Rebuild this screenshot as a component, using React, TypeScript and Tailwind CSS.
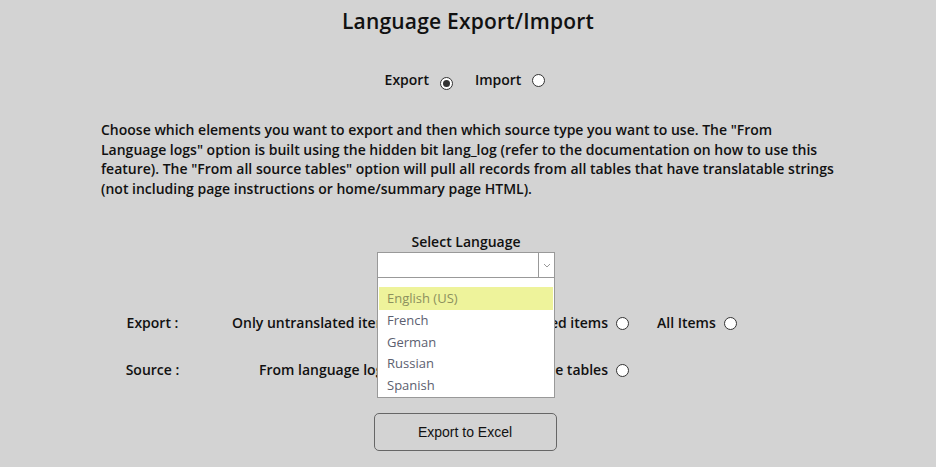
import React from "react";

function Radio({ checked = false }: { checked?: boolean }) {
  return (
    <span className="inline-flex h-[13px] w-[13px] shrink-0 items-center justify-center rounded-full border border-[#333] bg-white">
      {checked && <span className="h-[7px] w-[7px] rounded-full bg-[#333]" />}
    </span>
  );
}

function Option({ label, checked }: { label: string; checked?: boolean }) {
  return (
    <span className="inline-flex items-center gap-[8px] whitespace-nowrap">
      <span>{label}</span>
      <Radio checked={checked} />
    </span>
  );
}

const languages = ["English (US)", "French", "German", "Russian", "Spanish"];

export default function App() {
  return (
    <div className="h-[467px] w-[936px] overflow-hidden bg-[#d3d3d3] font-['Open_Sans','Liberation_Sans',sans-serif] text-[#111]">
      <h1 className="pt-[7px] text-center text-[21px] font-semibold leading-[28px] tracking-[0.2px]">
        Language Export/Import
      </h1>

      <div className="mr-[6px] mt-[34px] flex items-center justify-center gap-[22px] text-[14px] font-semibold leading-[18px]">
        <span className="inline-flex items-center gap-[11px]">
          <span>Export</span>
          <span className="mt-[4px]">
            <Radio checked />
          </span>
        </span>
        <span className="inline-flex items-center gap-[11px]">
          <span>Import</span>
          <span className="mt-[4px]">
            <Radio />
          </span>
        </span>
      </div>

      <p className="ml-[101px] mt-[29px] whitespace-nowrap text-[14px] font-semibold leading-[19.5px]">
        Choose which elements you want to export and then which source type you want to use. The "From
        <br />
        Language logs" option is built using the hidden bit lang_log (refer to the documentation on how to use this
        <br />
        feature). The "From all source tables" option will pull all records from all tables that have translatable strings
        <br />
        (not including page instructions or home/summary page HTML).
      </p>

      <div className="mr-[4px] mt-[35px] flex flex-col items-center">
        <div className="text-[14px] font-semibold leading-[18px]">Select Language</div>
        <div className="relative mt-[1px] w-[178px]">
          <div className="flex h-[26px] border border-[#999] bg-white">
            <div className="flex-1" />
            <div className="flex w-[16px] items-center justify-center border-l border-[#999]">
              <svg width="8" height="5" viewBox="0 0 8 5" fill="none">
                <path d="M1 1l3 3 3-3" stroke="#999" strokeWidth="1" />
              </svg>
            </div>
          </div>
          <ul className="absolute left-0 top-full z-10 h-[120px] w-full border border-t-0 border-[#999] bg-white pt-[9px] text-[13px] font-normal">
            {languages.map((l, i) => (
              <li
                key={l}
                className={
                  i === 0
                    ? "mx-[1px] flex h-[23px] items-center bg-[#eef39b] pl-[8px] text-[#8c905e]"
                    : "flex h-[21.5px] items-center pl-[9px] text-[#5c6070]"
                }
              >
                {l}
              </li>
            ))}
          </ul>
        </div>
      </div>

      <div className="mt-[36px] flex items-center text-[14px] font-semibold leading-[18px]">
        <div className="ml-[100px] w-[105px] text-center">Export :</div>
        <div className="flex w-[424px] items-center justify-between pl-[27px]">
          <Option label="Only untranslated items" />
          <Option label="Only translated items" />
        </div>
        <div className="ml-[28px]">
          <Option label="All Items" />
        </div>
      </div>

      <div className="mt-[29px] flex items-center text-[14px] font-semibold leading-[18px]">
        <div className="ml-[100px] w-[105px] text-center">Source :</div>
        <div className="flex w-[424px] items-center justify-between pl-[54px]">
          <Option label="From language logs" />
          <Option label="From all source tables" />
        </div>
      </div>

      <div className="mt-[34px] flex justify-center">
        <button
          type="button"
          className="ml-[-6px] h-[38px] w-[183px] rounded-[5px] border border-[#666] bg-transparent font-['Liberation_Sans',Arial,sans-serif] text-[14px] text-[#111]"
        >
          Export to Excel
        </button>
      </div>
    </div>
  );
}
